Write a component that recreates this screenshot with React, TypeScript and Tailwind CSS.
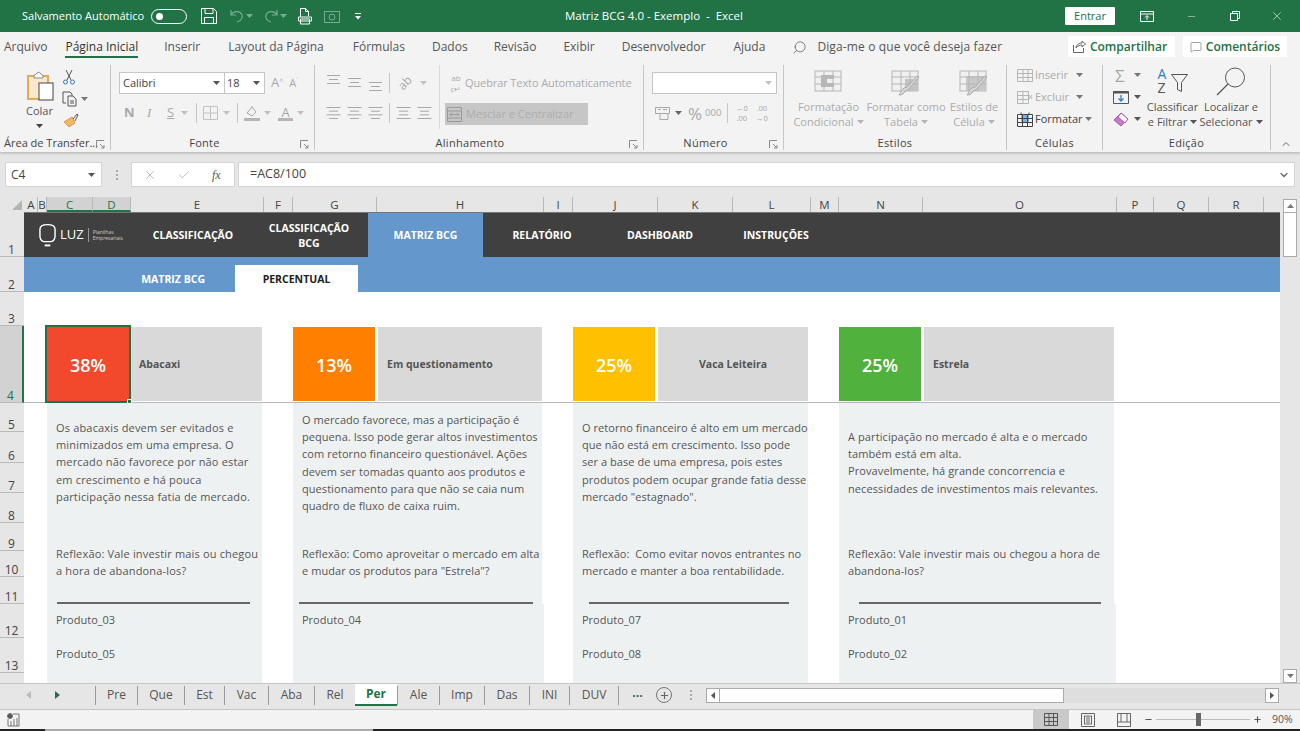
import React from 'react';
import { Search, MessageSquare, X, Minus, Check, ChevronDown, ChevronUp, Plus } from 'lucide-react';

const Caret = ({ className = 'text-[#777]' }: { className?: string }) => (
  <svg width="7" height="4" viewBox="0 0 7 4" className={className}><path d="M0 0h7L3.5 4z" fill="currentColor" /></svg>
);

const Lines = ({ widths, color = '#a8a8a8' }: { widths: number[]; color?: string }) => (
  <svg width="15" height="14" viewBox="0 0 15 14" fill="none" stroke={color}>
    {widths.map((w, i) => {
      const y = 1.5 + i * (11 / (widths.length - 1));
      return <path key={i} d={`M${(15 - w) / 2} ${y}h${w}`} />;
    })}
  </svg>
);

const AlignV = ({ top }: { top: number }) => (
  <svg width="15" height="18" viewBox="0 0 15 18" fill="none" stroke="#a8a8a8">
    <path d={`M1 ${top + 0.5}h13M3 ${top + 4.5}h9M1 ${top + 8.5}h13`} />
  </svg>
);

const TableIcon = ({ brush = true, kind = 0 }: { brush?: boolean; kind?: number }) => (
  <svg width="30" height="28" viewBox="0 0 30 28" fill="none">
    <rect x="1" y="1" width="26" height="20" fill="#f0f0f0" stroke="#b5b5b5" />
    {kind === 0 && <path d="M7 5h13v4h-7v4h7v4H7z" fill="#b8b8b8" />}
    {kind === 1 && <rect x="14" y="9" width="13" height="12" fill="#c4c4c4" />}
    {kind === 2 && <rect x="7" y="6" width="20" height="15" fill="#c9c9c9" />}
    <path d="M1 7h26M1 14h26M10 1v20M19 1v20" stroke="#b5b5b5" />
    {brush && <path d="M28 7 17 20l-3 1c-1 3-3 4-6 4 2-2 2-5 5-7l3-1L26 6z" fill="#d6d6d6" stroke="#aaa" />}
  </svg>
);

const cols: [string, number][] = [
  ['A', 13], ['B', 9], ['C', 46], ['D', 38], ['E', 133], ['F', 29], ['G', 84], ['H', 167], ['I', 29], ['J', 85],
  ['K', 75], ['L', 78], ['M', 28], ['N', 84], ['O', 194], ['P', 37], ['Q', 55], ['R', 55],
];

const rows: [string, number][] = [
  ['1', 45], ['2', 35], ['3', 34], ['4', 77], ['5', 29], ['6', 31], ['7', 30], ['8', 30], ['9', 28], ['10', 26],
  ['11', 27], ['12', 34], ['13', 35],
];

const tabs: [string, number][] = [
  ['Pre', 42], ['Que', 47], ['Est', 40], ['Vac', 44], ['Aba', 46], ['Rel', 41], ['Per', 42], ['Ale', 42], ['Imp', 45],
  ['Das', 45], ['INI', 40], ['DUV', 49],
];

const menu: [string, string][] = [
  ['Arquivo', 'ml-[4px]'], ['Página Inicial', 'ml-[18px]'], ['Inserir', 'ml-[26px]'], ['Layout da Página', 'ml-[28px]'],
  ['Fórmulas', 'ml-[29px]'], ['Dados', 'ml-[27px]'], ['Revisão', 'ml-[26px]'], ['Exibir', 'ml-[27px]'],
  ['Desenvolvedor', 'ml-[27px]'], ['Ajuda', 'ml-[28px]'],
];

const cards = [
  {
    pct: '38%', title: 'Abacaxi', color: 'bg-[#f2492c]', size: 'w-[215px] ml-[23px]', gap: '', pad: 'pl-[10px]', top: 'pt-[16px]', track: 'tracking-[0.17px]',
    text: ['Os abacaxis devem ser evitados e', 'minimizados em uma empresa. O', 'mercado não favorece por não estar', 'em crescimento e há pouca', 'participação nessa fatia de mercado.'],
    reflexao: ['Reflexão: Vale investir mais ou chegou', 'a hora de abandona-los?'],
    rule: 'ml-[10px] w-[193px]', products: ['Produto_03', 'Produto_05'], lower: 'w-[215px]',
  },
  {
    pct: '13%', title: 'Em questionamento', color: 'bg-[#ff7f00]', size: 'w-[249px] ml-[31px]', gap: 'ml-[3px]', pad: 'pl-[9px]', top: 'pt-[8px]', track: 'tracking-[0.06px]',
    text: ['O mercado favorece, mas a participação é', 'pequena. Isso pode gerar altos investimentos', 'com retorno financeiro questionável. Ações', 'devem ser tomadas quanto aos produtos e', 'questionamento para que não se caia num', 'quadro de fluxo de caixa ruim.'],
    reflexao: ['Reflexão: Como aproveitar o mercado em alta', 'e mudar os produtos para "Estrela"?'],
    rule: 'ml-[6px] w-[234px]', products: ['Produto_04'], lower: 'w-[251px]',
  },
  {
    pct: '25%', title: 'Vaca Leiteira', color: 'bg-[#ffc000]', size: 'w-[235px] ml-[31px]', gap: 'ml-[3px]', pad: 'justify-center', top: 'pt-[16px]', track: 'tracking-[0.05px]',
    text: ['O retorno financeiro é alto em um mercado', 'que não está em crescimento. Isso pode', 'ser a base de uma empresa, pois estes', 'produtos podem ocupar grande fatia desse', 'mercado "estagnado".'],
    reflexao: ['Reflexão:  Como evitar novos entrantes no', 'mercado e manter a boa rentabilidade.'],
    rule: 'ml-[16px] w-[200px]', products: ['Produto_07', 'Produto_08'], lower: 'w-[235px]',
  },
  {
    pct: '25%', title: 'Estrela', color: 'bg-[#50b13c]', size: 'w-[275px] ml-[31px]', gap: 'ml-[3px]', pad: 'pl-[9px]', top: 'pt-[25px]', track: 'tracking-[0.1px]',
    text: ['A participação no mercado é alta e o mercado', 'também está em alta.', 'Provavelmente, há grande concorrencia e', 'necessidades de investimentos mais relevantes.'],
    reflexao: ['Reflexão: Vale investir mais ou chegou a hora de', 'abandona-los?'],
    rule: 'ml-[20px] w-[242px]', products: ['Produto_01', 'Produto_02'], lower: 'w-[277px]',
  },
];

const Group = ({ width, label, launcher, labelClass = 'text-center', children }: { width: string; label: string; launcher?: boolean; labelClass?: string; children: React.ReactNode }) => (
  <div className={`${width} relative shrink-0 flex flex-col h-full border-r border-[#c6c6c6]`}>
    <div className="h-[70px] flex">{children}</div>
    <div className={`mt-[1px] text-[11px] leading-[14px] text-[#444] tracking-[0.3px] whitespace-nowrap ${labelClass}`}>{label}</div>
    {launcher && (
      <svg className="absolute right-[5px] bottom-[1px]" width="9" height="9" viewBox="0 0 9 9" fill="none" stroke="#8a8a8a">
        <path d="M.5 8V.5H8M4 4l4 4M8 5v3H5" />
      </svg>
    )}
  </div>
);

const BigButton = ({ width, icon, lines }: { width: string; icon: React.ReactNode; lines: string[] }) => (
  <div className={`${width} shrink-0 flex flex-col items-center text-[11px] leading-[15px] text-[#ababab]`}>
    <div className="h-[28px] mt-[5px] flex items-center justify-center">{icon}</div>
    <div className="mt-[1px] text-center whitespace-nowrap">{lines[0]}</div>
    <div className="flex items-center gap-[3px] whitespace-nowrap">{lines[1]}<Caret className="text-[#b5b5b5]" /></div>
  </div>
);

export default function App() {
  return (
    <div className="w-[1300px] h-[731px] overflow-hidden flex flex-col bg-[#e6e6e6] font-['Open_Sans','Noto_Sans',sans-serif] text-[#444]">
      {/* Title bar */}
      <div className="h-[32px] shrink-0 bg-[#217346] flex items-center text-white relative">
        <span className="ml-[22px] text-[11px] whitespace-nowrap w-[129px]">Salvamento Automático</span>
        <div className="w-[36px] h-[15px] rounded-full border border-white flex items-center pl-[4px]">
          <div className="w-[7px] h-[7px] rounded-full bg-white" />
        </div>
        <svg className="ml-[14px]" width="16" height="16" viewBox="0 0 16 16" fill="none" stroke="#fff">
          <path d="M.5.5h12l3 3v12H.5zM4 .5v5h8v-5M3.5 15.5v-6h9v6" />
        </svg>
        <svg className="ml-[13px] opacity-40" width="14" height="14" viewBox="0 0 14 14" fill="none" stroke="#fff" strokeWidth="1.2">
          <path d="M1 1v5h5M1 6c2-4 9-5 11 0 1 3-1 6-5 7" />
        </svg>
        <Caret className="ml-[2px] text-white opacity-40" />
        <svg className="ml-[11px] opacity-40" width="14" height="14" viewBox="0 0 14 14" fill="none" stroke="#fff" strokeWidth="1.2">
          <path d="M13 1v5H8M13 6C11 2 4 1 2 6c-1 3 1 6 5 7" />
        </svg>
        <Caret className="ml-[2px] text-white opacity-40" />
        <svg className="ml-[11px]" width="15" height="17" viewBox="0 0 15 17" fill="none" stroke="#fff">
          <path d="M2.5 9V.5h5l3 3V8M7.5.5v3h3M2.500 11h9v5h-9zM.5 9h13v4H.5z" />
        </svg>
        <svg className="ml-[11px] opacity-40" width="16" height="14" viewBox="0 0 16 14" fill="none" stroke="#fff">
          <rect x=".5" y="2.5" width="15" height="11" /><circle cx="8" cy="8" r="3" />
        </svg>
        <svg className="ml-[14px]" width="8" height="8" viewBox="0 0 8 8" fill="#fff">
          <rect x="1" y="1" width="6" height="1" /><path d="M1 4h6L4 7.5z" />
        </svg>
        <span className="absolute left-[565px] text-[11.5px] whitespace-pre">Matriz BCG 4.0 - Exemplo  -  Excel</span>
        <div className="ml-auto w-[50px] h-[18px] bg-white rounded-[1px] text-[#217346] text-[11px] flex items-center justify-center">Entrar</div>
        <svg className="ml-[25px]" width="14" height="11" viewBox="0 0 14 11" fill="none" stroke="#fff">
          <path d="M.5.5h13v10H.5zM.5 3h13" /><path d="M7 9V5M5 6.5l2-2 2 2" />
        </svg>
        <Minus className="ml-[32px]" size={11} strokeWidth={1} />
        <svg className="ml-[33px]" width="10" height="10" viewBox="0 0 10 10" fill="none" stroke="#fff">
          <path d="M.5 2.500h7v7h-7zM2.500 2.500v-2h7v7h-2" />
        </svg>
        <X className="ml-[30px] mr-[16px]" size={14} strokeWidth={1} />
      </div>

      {/* Menu tabs */}
      <div className="h-[30px] shrink-0 bg-[#f3f3f3] flex items-center text-[12px] text-[#555] relative">
        {menu.map(([name, margin]) => (
          <span key={name} className={`${margin} whitespace-nowrap ${name === 'Página Inicial' ? 'text-[#333] font-medium self-start h-[26px] flex items-center border-b-2 border-[#217346] pt-[5px]' : ''}`}>{name}</span>
        ))}
        <Search className="ml-[27px] -scale-x-100 text-[#666]" size={15} strokeWidth={1.3} />
        <span className="ml-[10px] whitespace-nowrap tracking-[0.13px]">Diga-me o que você deseja fazer</span>
        <div className="absolute left-[1068px] top-[4px] w-[107px] h-[21px] bg-white flex items-center justify-center gap-[4px] text-[#217346] font-semibold pr-[3px]">
          <svg width="13" height="13" viewBox="0 0 13 13" fill="none" stroke="#666"><path d="M.5 5v7.500h10V8M3 8c0-3 3-5 6-5V1l3.500 3L9 7V5C7 5 4 6 3 8z" /></svg>
          Compartilhar
        </div>
        <div className="absolute left-[1183px] top-[4px] w-[104px] h-[21px] bg-white flex items-center justify-center gap-[4px] text-[#217346] font-semibold">
          <MessageSquare size={12} strokeWidth={1.2} className="text-[#666]" />
          Comentários
        </div>
      </div>

      {/* Ribbon */}
      <div className="h-[90px] shrink-0 bg-[#f3f3f3] shadow-[0_1px_3px_rgba(0,0,0,0.25)] flex pt-[3px] pb-[2px]">
        <Group width="w-[111px]" label="Área de Transfer..." launcher labelClass="pl-[4px] tracking-normal">
          <div className="w-[55px] flex flex-col items-center pl-[24px] shrink-0">
            <svg className="mt-[6px] shrink-0" width="28" height="30" viewBox="0 0 28 30" fill="none">
              <path d="M2 5h20v23H2z" fill="#fbe8cc" stroke="#e8a85a" strokeWidth="2" />
              <path d="M8 5c0-2 2-1 3-3 1-1 3-1 3 0 1 2 3 1 3 3v2H8z" fill="#fff" stroke="#888" />
              <rect x="13" y="12" width="14" height="17" fill="#fff" stroke="#444" />
            </svg>
            <span className="text-[11px] leading-[15px] mt-[2px] text-[#555]">Colar</span>
            <Caret className="mt-[6px]" />
          </div>
          <div className="flex flex-col ml-[7px] mt-[4px] gap-[6px]">
            <svg width="14" height="16" viewBox="0 0 14 16" fill="none" stroke="#555">
              <path d="M4 1l5 10M10 1 5 11" /><circle cx="3.5" cy="13" r="2" stroke="#3b79b8" /><circle cx="10.5" cy="13" r="2" stroke="#3b79b8" />
            </svg>
            <div className="flex items-center gap-[3px]">
              <svg width="16" height="16" viewBox="0 0 16 16" fill="none" stroke="#555">
                <path d="M4 12H1V1h7l2 2v2M6 5h5l3 3v7H6zM8 10h4M8 12h4" />
              </svg>
              <Caret />
            </div>
            <svg className="ml-[1px]" width="16" height="15" viewBox="0 0 16 15" fill="none">
              <path d="M1 9 9 4l3 6-6 4z" fill="#f3b566" stroke="#e09a44" /><path d="M10 6l4-5 1 1-3 6" stroke="#555" />
            </svg>
          </div>
        </Group>
        <Group width="w-[204px]" label="Fonte" launcher labelClass="text-center pr-[16px]">
          <div className="flex flex-col pl-[8px] pt-[7px]">
            <div className="flex items-center h-[22px]">
              <div className="w-[106px] h-[22px] bg-white border border-[#c6c6c6] flex items-center justify-between pl-[3px] pr-[4px] text-[11px]">Calibri<Caret className="text-[#555]" /></div>
              <div className="w-[40px] h-[22px] bg-white border border-[#c6c6c6] border-l-0 flex items-center justify-between pl-[2px] pr-[4px] text-[11px]">18<Caret className="text-[#555]" /></div>
              <span className="ml-[6px] text-[13px] text-[#a8a8a8]">A<sup className="text-[7px]">^</sup></span>
              <span className="ml-[6px] text-[11px] text-[#a8a8a8]">A<sup className="text-[7px]">˅</sup></span>
            </div>
            <div className="flex items-center h-[20px] mt-[9px] pl-[5px] text-[#a8a8a8]">
              <span className="w-[10px] text-[13px] font-bold">N</span>
              <span className="ml-[13px] w-[8px] text-[13px] italic font-['Liberation_Serif',serif]">I</span>
              <span className="ml-[12px] w-[8px] text-[13px] underline">S</span>
              <Caret className="ml-[6px] text-[#c0c0c0]" />
              <div className="ml-[8px] w-px h-[20px] bg-[#c6c6c6]" />
              <svg className="ml-[6px]" width="15" height="14" viewBox="0 0 15 14" fill="none" stroke="#c2c2c2"><path d="M.5.5h14v13H.5zM7.500.5v13M.5 7h14" /></svg>
              <Caret className="ml-[5px] text-[#c0c0c0]" />
              <div className="ml-[7px] w-px h-[20px] bg-[#c6c6c6]" />
              <svg className="ml-[6px]" width="16" height="16" viewBox="0 0 16 16" fill="none" stroke="#a8a8a8"><path d="m3 8 5-6 4 5-4 4zM8 2V1" /><rect x="0" y="13" width="16" height="3" fill="#b5b5b5" stroke="none" /></svg>
              <Caret className="ml-[4px] text-[#c0c0c0]" />
              <div className="ml-[7px] w-[15px] flex flex-col items-center leading-[12px] text-[13px]">A<div className="w-[15px] h-[3px] bg-[#b5b5b5]" /></div>
              <Caret className="ml-[4px] text-[#c0c0c0]" />
            </div>
          </div>
        </Group>
        <Group width="w-[329px]" label="Alinhamento" launcher labelClass="text-center pr-[18px]">
          <div className="flex flex-col pl-[11px] pt-[7px] w-[125px] shrink-0 border-r border-[#dadada] h-[64px]">
            <div className="flex items-center h-[22px] gap-[6px]">
              <AlignV top={1} /><AlignV top={4} /><AlignV top={8} />
              <div className="w-px h-[20px] bg-[#c6c6c6]" />
              <span className="text-[12px] text-[#a8a8a8] -rotate-45 ml-[2px]">ab</span>
              <Caret className="text-[#c0c0c0] ml-[2px]" />
            </div>
            <div className="flex items-center h-[20px] gap-[6px] mt-[9px]">
              <Lines widths={[14, 9, 14, 9]} /><Lines widths={[14, 9, 14, 9]} /><Lines widths={[14, 9, 14, 9]} />
              <div className="w-px h-[20px] bg-[#c6c6c6]" />
              <Lines widths={[14, 9, 9, 14]} /><Lines widths={[14, 9, 9, 14]} />
            </div>
          </div>
          <div className="pl-[5px] pt-[7px] text-[11px] text-[#ababab]">
            <div className="flex items-center h-[22px] pl-[4px] whitespace-nowrap">
              <span className="text-[8px] leading-[11px] w-[14px] mr-[2px] text-center">ab<br />c↵</span>
              <span className="tracking-[-0.1px]">Quebrar Texto Automaticamente</span>
            </div>
            <div className="mt-[9px] w-[143px] h-[22px] bg-[#c6c6c6] flex items-center pl-[2px] gap-[4px] text-[#adadad] whitespace-nowrap">
              <svg width="15" height="15" viewBox="0 0 15 15" fill="none" stroke="#9a9a9a"><path d="M.5.5h14v14H.5zM.5 4h14M.5 11h14M3 7.500h9M5 5.500l-2 2 2 2M10 5.500l2 2-2 2" /></svg>
              Mesclar e Centralizar
            </div>
          </div>
        </Group>
        <Group width="w-[140px]" label="Número" launcher labelClass="text-center pr-[16px]">
          <div className="flex flex-col pl-[8px] pt-[7px]">
            <div className="w-[125px] h-[22px] bg-white border border-[#c6c6c6] flex items-center justify-end pr-[4px]"><Caret className="text-[#c0c0c0]" /></div>
            <div className="flex items-center h-[20px] mt-[9px] pl-[3px] text-[#a8a8a8]">
              <svg width="15" height="14" viewBox="0 0 15 14" fill="none" stroke="#a8a8a8"><path d="M.5 1.500h14v6H.5zM5 7.500h8v6H5z" /><path d="M3 3.500h3M8 3.500h4" /></svg>
              <Caret className="ml-[5px] text-[#666]" />
              <span className="ml-[6px] text-[17px] leading-none">%</span>
              <span className="ml-[3px] text-[9.5px]">000</span>
              <div className="ml-[6px] w-px h-[20px] bg-[#c6c6c6]" />
              <span className="ml-[6px] text-[7.5px] leading-[10px] w-[15px] text-center">←0<br />.00</span>
              <span className="ml-[5px] text-[7.5px] leading-[10px] w-[15px] text-center">.00<br />→0</span>
            </div>
          </div>
        </Group>
        <Group width="w-[223px]" label="Estilos">
          <div className="w-[8px] shrink-0" />
          <BigButton width="w-[73px]" icon={<TableIcon brush={false} />} lines={['Formatação', 'Condicional']} />
          <BigButton width="w-[82px]" icon={<TableIcon kind={1} />} lines={['Formatar como', 'Tabela']} />
          <BigButton width="w-[54px]" icon={<TableIcon kind={2} />} lines={['Estilos de', 'Célula']} />
        </Group>
        <Group width="w-[96px]" label="Células">
          <div className="flex flex-col pl-[10px] -mt-[1px] text-[11px] leading-[22px] text-[#ababab]">
            <div className="flex items-center h-[22px]">
              <svg width="16" height="13" viewBox="0 0 16 13" fill="none" stroke="#b5b5b5"><path d="M.5.5h15v12H.5zM.5 4.500h15M.5 8.500h15M6 .5v12M11 .5v12" /></svg>
              <span className="ml-[2px] w-[41px]">Inserir</span><Caret />
            </div>
            <div className="flex items-center h-[22px]">
              <svg width="16" height="13" viewBox="0 0 16 13" fill="none" stroke="#b5b5b5"><path d="M.5.5h11v12H.5zM.5 4.500h11M.5 8.500h11M6 .5v12M12 4l3 4M15 4l-3 4" /></svg>
              <span className="ml-[2px] w-[41px]">Excluir</span><Caret />
            </div>
            <div className="flex items-center h-[22px] text-[#444]">
              <svg width="16" height="15" viewBox="0 0 16 15" fill="none" stroke="#444"><rect x="4" y="3" width="8" height="8" fill="#7fb2e0" stroke="none" /><path d="M.5 2.500h15v12H.5zM.5 6.500h15M.5 10.500h15M5.500 2.500v12M10.500 2.500v12M4 .5v2M12 .5v2" /></svg>
              <span className="ml-[2px] mr-[2px]">Formatar</span><Caret />
            </div>
          </div>
        </Group>
        <Group width="w-[168px]" label="Edição">
          <div className="flex flex-col pl-[10px] -mt-[1px] w-[42px] shrink-0">
            <div className="flex items-center h-[22px] gap-[6px] pl-[2px] text-[#a8a8a8] text-[17px]"><span className="w-[13px] leading-none">Σ</span><Caret /></div>
            <div className="flex items-center h-[22px] gap-[5px]">
              <svg className="shrink-0" width="16" height="14" viewBox="0 0 16 14" fill="none"><path d="M.5 1.500h15v12H.5z" stroke="#555" /><path d="M.5 1.500h15v2H.5z" fill="#555" /><path d="M8 5v6M5.500 8.500 8 11l2.500-2.500" stroke="#2f7fc1" strokeWidth="1.3" /></svg>
              <Caret className="text-[#555] shrink-0" />
            </div>
            <div className="flex items-center h-[22px] gap-[5px]">
              <svg className="shrink-0" width="16" height="15" viewBox="0 0 16 15" fill="none"><path d="M1 8 8 1l7 6-7 7z" fill="#c87bc4" stroke="#a45aa0" /><path d="m5 5 7 6 3-4-7-6z" fill="#fff" stroke="#a45aa0" /></svg>
              <Caret className="text-[#555] shrink-0" />
            </div>
          </div>
          <div className="w-[55px] shrink-0 flex flex-col items-center text-[11px] leading-[15px] text-[#555]">
            <div className="mt-[2px] w-[30px] h-[29px] shrink-0 flex">
              <div className="w-[13px] flex flex-col text-[14px] leading-[14px]">
                <span className="text-[#2f7fc1]">A</span>
                <span>Z</span>
              </div>
              <svg className="mt-[7px]" width="17" height="18" viewBox="0 0 17 18" fill="none" stroke="#555">
                <path d="M.5.500h16l-6 8v9l-4-2v-7z" />
              </svg>
            </div>
            <span className="mt-[3px] whitespace-nowrap">Classificar</span>
            <span className="flex items-center gap-[3px] whitespace-nowrap">e Filtrar<Caret className="text-[#555]" /></span>
          </div>
          <div className="w-[62px] shrink-0 flex flex-col items-center text-[11px] leading-[15px] text-[#555]">
            <svg className="mt-[2px] shrink-0" width="30" height="29" viewBox="0 0 30 29" fill="none" stroke="#555">
              <circle cx="19" cy="10.5" r="9.5" /><path d="M12 17 1 28" strokeWidth="1.2" />
            </svg>
            <span className="mt-[3px] whitespace-nowrap">Localizar e</span>
            <span className="flex items-center gap-[3px] whitespace-nowrap">Selecionar<Caret className="text-[#555]" /></span>
          </div>
        </Group>
        <div className="flex-1 flex items-end justify-center"><ChevronUp size={12} strokeWidth={2} className="text-[#666]" /></div>
      </div>

      {/* Formula bar */}
      <div className="h-[25px] shrink-0 mt-[10px] flex items-stretch">
        <div className="ml-[5px] w-[97px] bg-white border border-[#d4d4d4] flex items-center justify-between pl-[5px] pr-[6px] text-[12px]">C4<Caret className="text-[#555]" /></div>
        <div className="w-[29px] flex flex-col items-center justify-center gap-[2px]">
          <span className="w-[2px] h-[2px] bg-[#aaa]" /><span className="w-[2px] h-[2px] bg-[#aaa]" /><span className="w-[2px] h-[2px] bg-[#aaa]" />
        </div>
        <div className="w-[104px] bg-white border border-[#d4d4d4] flex items-center pl-[11px] text-[#b5b5b5]">
          <X size={14} strokeWidth={1.5} />
          <Check className="ml-[20px]" size={14} strokeWidth={1.5} />
          <span className="ml-[21px] text-[12px] italic text-[#555] font-['Liberation_Serif',serif]">fx</span>
        </div>
        <div className="ml-[3px] w-[1057px] bg-white border border-[#d4d4d4] flex items-center justify-between pl-[11px] pr-[4px] text-[12.5px]">
          =AC8/100
          <ChevronDown size={12} strokeWidth={2.5} className="text-[#666]" />
        </div>
      </div>

      {/* Column headers */}
      <div className="h-[15px] shrink-0 mt-[10px] flex text-[11.5px] leading-[15px] text-[#444]">
        <div className="w-[25px] flex items-end justify-end pr-[3px] pb-[2px]">
          <svg width="10" height="10" viewBox="0 0 10 10"><path d="M10 0v10H0z" fill="#b5b5b5" /></svg>
        </div>
        {cols.map(([name, width]) => (
          <div
            key={name}
            style={{ width }}
            className={`text-center border-r border-[#b9b9b9] ${name === 'C' || name === 'D' ? 'bg-[#d2d2d2] border-b-2 border-b-[#217346] text-[#217346]' : ''}`}
          >
            {name}
          </div>
        ))}
      </div>

      {/* Sheet */}
      <div className="flex-1 min-h-0 flex">
        <div className="w-[24px] shrink-0 flex flex-col overflow-hidden text-[12px] leading-[13px] text-[#444]">
          {rows.map(([name, height]) => (
            <div
              key={name}
              style={{ height }}
              className={`shrink-0 flex items-end justify-center border-b border-[#b9b9b9] pr-[1px] ${name === '4' ? 'bg-[#d2d2d2] border-r-2 border-r-[#217346] text-[#217346]' : ''}`}
            >
              {name}
            </div>
          ))}
        </div>
        <div className="w-[1256px] shrink-0 bg-white flex flex-col border-t border-[#777] overflow-hidden">
          {/* Nav */}
          <div className="h-[44px] shrink-0 bg-[#404040] flex items-center text-white text-[10.5px] font-bold">
            <div className="w-[106px] h-full flex items-center pl-[15px] gap-[4px]">
              <svg width="17" height="25" viewBox="0 0 18 25" fill="none" stroke="#fff" strokeWidth="1.5">
                <path d="M5 19C2 18 1 15 1 13V6c0-3 3-5 8-5s8 2 8 5v7c0 2-1 5-4 6z" /><path d="M6 23h6" strokeWidth="2" />
              </svg>
              <span className="text-[13px] font-normal">LUZ</span>
              <div className="w-px h-[14px] bg-[#999]" />
              <span className="text-[5px] leading-[6px] font-normal text-[#ccc]">Planilhas<br />Empresariais</span>
            </div>
            <div className="w-[126px] text-center pt-[2px]">CLASSIFICAÇÃO</div>
            <div className="w-[106px] text-center leading-[15px] pt-[1px]">CLASSIFICAÇÃO<br />BCG</div>
            <div className="ml-[6px] w-[115px] h-full bg-[#6497cb] flex items-center justify-center pt-[2px]">MATRIZ BCG</div>
            <div className="w-[118px] text-center pt-[2px]">RELATÓRIO</div>
            <div className="w-[118px] text-center pt-[2px]">DASHBOARD</div>
            <div className="w-[114px] text-center pt-[2px]">INSTRUÇÕES</div>
          </div>
          {/* Sub nav */}
          <div className="h-[35px] shrink-0 bg-[#6497cb] flex items-end text-[10.5px] font-bold">
            <div className="w-[211px] h-[27px] flex items-center justify-end pr-[30px] pt-[3px] text-white">MATRIZ BCG</div>
            <div className="w-[123px] h-[27px] bg-white flex items-center justify-center pt-[3px] text-[#222]">PERCENTUAL</div>
          </div>
          <div className="h-[34px] shrink-0" />
          {/* Card headers */}
          <div className="h-[77px] shrink-0 flex border-b border-[#b9b9b9] relative pt-[1px]">
            {cards.map(card => (
              <div key={card.pct + card.title} className={`${card.size} h-[74px] shrink-0 flex`}>
                <div className={`${card.color} w-[82px] shrink-0 flex items-center justify-center pt-[2px] text-white text-[18px] font-semibold`}>{card.pct}</div>
                <div className={`${card.gap} ${card.pad} flex-1 bg-[#d9d9d9] flex items-center pt-[2px] text-[10.5px] font-bold text-[#555]`}>{card.title}</div>
              </div>
            ))}
            <div className="absolute left-[21px] top-[-1px] w-[86px] h-[78px] border-2 border-[#217346]">
              <div className="absolute right-[-3px] bottom-[-3px] w-[5px] h-[5px] bg-[#217346] border border-white" />
            </div>
          </div>
          {/* Card bodies */}
          <div className="flex-1 min-h-0 flex">
            {cards.map(card => (
              <div key={card.pct + card.title} className={`${card.size} shrink-0 flex flex-col`}>
                <div className={`${card.track} h-[201px] shrink-0 bg-[#eef1f2] flex flex-col text-[11px] leading-[17.2px] text-[#555] whitespace-pre`}>
                  <div className={`${card.top} pl-[9px]`}>
                    {card.text.map(line => <div key={line}>{line}</div>)}
                  </div>
                  <div className="mt-auto pl-[9px] mb-[23px]">
                    {card.reflexao.map(line => <div key={line}>{line}</div>)}
                  </div>
                  <div className={`${card.rule} h-[2px] bg-[#666] shrink-0`} />
                </div>
                <div className={`${card.lower} flex-1 bg-[#eef1f2] pl-[9px] pt-[7px] text-[11px] text-[#555] flex flex-col gap-[17px] leading-[17px]`}>
                  {card.products.map(p => <div key={p}>{p}</div>)}
                </div>
              </div>
            ))}
          </div>
        </div>
        {/* Vertical scrollbar */}
        <div className="w-[20px] flex flex-col bg-[#e6e6e6] px-[3px] -mt-[13px]">
          <div className="h-[14px] bg-white border border-[#ababab] flex items-center justify-center"><svg width="7" height="4" viewBox="0 0 7 4"><path d="M3.5 0 7 4H0z" fill="#777" /></svg></div>
          <div className="h-[44px] bg-white border border-[#ababab] border-t-0" />
          <div className="flex-1" />
          <div className="h-[14px] bg-white border border-[#ababab] flex items-center justify-center"><Caret /></div>
        </div>
      </div>

      {/* Sheet tabs */}
      <div className="h-[26px] shrink-0 bg-[#e6e6e6] border-t border-[#c6c6c6] flex items-center pb-[3px] text-[12px] text-[#555]">
        <div className="w-[95px] h-full flex items-center pl-[26px] gap-[24px]">
          <svg width="5" height="8" viewBox="0 0 5 8"><path d="M5 0v8L0 4z" fill="#bbb" /></svg>
          <svg width="5" height="8" viewBox="0 0 5 8"><path d="M0 0v8l5-4z" fill="#217346" /></svg>
        </div>
        {tabs.map(([name, width]) => (
          <div
            key={name}
            style={{ width }}
            className={`flex items-center justify-center ${name === 'Per' ? 'h-[22px] bg-white font-bold text-[#217346] border-b-2 border-[#217346]' : 'h-[19px] border-l border-[#9a9a9a]'}`}
          >
            {name}
          </div>
        ))}
        <div className="h-[19px] w-[38px] border-l border-[#9a9a9a] flex items-center justify-center font-bold text-[#217346] pb-[4px]">...</div>
        <div className="w-[16px] h-[16px] rounded-full border border-[#777] flex items-center justify-center"><Plus size={11} strokeWidth={2.5} className="text-[#666]" /></div>
        <div className="ml-[18px] flex flex-col gap-[2px]">
          <span className="w-[2px] h-[2px] bg-[#aaa]" /><span className="w-[2px] h-[2px] bg-[#aaa]" /><span className="w-[2px] h-[2px] bg-[#aaa]" />
        </div>
        <div className="ml-[14px] w-[573px] h-[15px] flex">
          <div className="w-[14px] bg-white border border-[#ababab] flex items-center justify-center"><svg width="4" height="7" viewBox="0 0 4 7"><path d="M4 0v7L0 3.5z" fill="#555" /></svg></div>
          <div className="w-[344px] bg-white border border-[#ababab] border-l-0" />
          <div className="flex-1 bg-[#dedede]" />
          <div className="w-[14px] bg-white border border-[#ababab] flex items-center justify-center"><svg width="4" height="7" viewBox="0 0 4 7"><path d="M0 0v7l4-3.5z" fill="#555" /></svg></div>
        </div>
      </div>

      {/* Status bar */}
      <div className="h-[20px] shrink-0 bg-[#f3f3f3] border-t border-[#c6c6c6] flex items-center">
        <svg className="ml-[7px]" width="13" height="14" viewBox="0 0 13 14" fill="none" stroke="#777">
          <circle cx="3" cy="3" r="2.5" fill="#555" /><path d="M6 1h6v12H1V6M4 8v5M7 6v7M10 5v8" />
        </svg>
        <div className="ml-auto w-[36px] h-full bg-[#c9c9c9] flex items-center justify-center">
          <svg width="14" height="13" viewBox="0 0 14 13" fill="none" stroke="#555"><path d="M.5.5h13v12H.5zM.5 4.500h13M.5 8.500h13M5 .5v12M9.500.5v12" /></svg>
        </div>
        <svg className="ml-[12px]" width="14" height="14" viewBox="0 0 14 14" fill="none" stroke="#666"><path d="M.5.5h13v13H.5zM3.500 3h7v8h-7zM5 5h4M5 7h4M5 9h4" /></svg>
        <svg className="ml-[22px]" width="14" height="14" viewBox="0 0 14 14" fill="none" stroke="#666"><path d="M.5.5h13v13H.5zM.5 9h13M4 .5V9M10 .5V9" /></svg>
        <Minus className="ml-[13px] text-[#555]" size={9} strokeWidth={3} />
        <div className="ml-[3px] w-[94px] h-[1px] bg-[#bbb] relative">
          <div className="absolute left-[40px] top-[-6px] w-[5px] h-[13px] bg-[#666]" />
        </div>
        <Plus className="ml-[3px] text-[#555]" size={9} strokeWidth={3} />
        <span className="ml-[10px] mr-[7px] w-[21px] text-[10.5px] text-[#555]">90%</span>
      </div>

      {/* Bottom edge of the capture */}
      <div className="h-[2px] shrink-0 flex bg-[#222]">
        <div className="ml-[45px] w-[328px] bg-[#aaa]" />
      </div>
    </div>
  );
}
